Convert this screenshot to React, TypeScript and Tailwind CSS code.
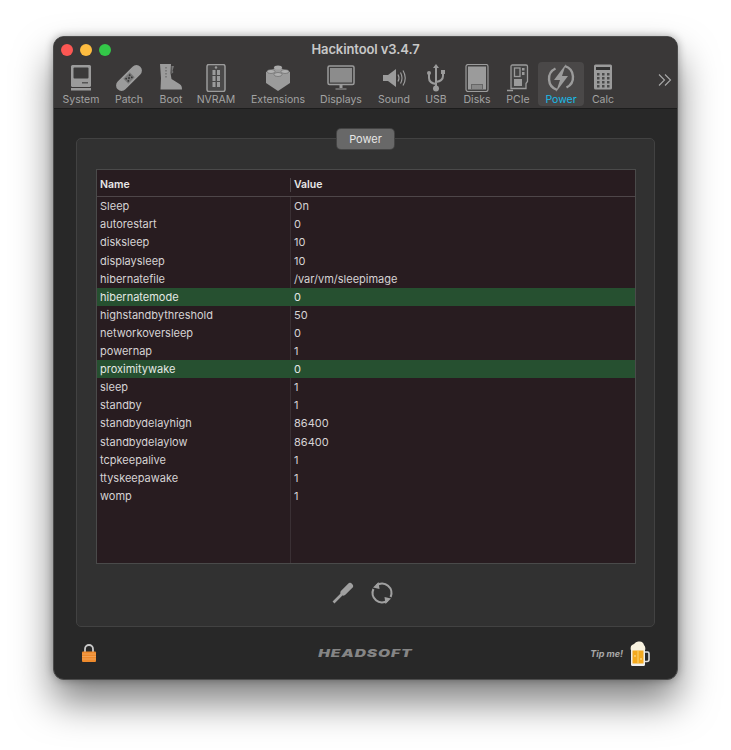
import type { ReactNode } from "react"

const G = "#9b9b9b"

function Icon({ children, w = 34 }: { children: ReactNode; w?: number }) {
  return (
    <svg width={w} height="28" viewBox={`0 0 ${w} 28`} fill="none">
      {children}
    </svg>
  )
}

const tools: { label: string; w: string; icon: ReactNode; active?: boolean }[] = [
  {
    label: "System",
    w: "w-[48px]",
    icon: (
      <Icon>
        <rect x="7" y="1" width="20" height="22" rx="1.5" fill={G} />
        <rect x="9.5" y="3.5" width="15" height="11" rx="1" fill="#3b3a3a" />
        <rect x="18" y="18" width="6" height="1.5" fill="#555" />
        <rect x="7" y="24" width="20" height="2.5" fill={G} />
      </Icon>
    ),
  },
  {
    label: "Patch",
    w: "w-[48px]",
    icon: (
      <Icon>
        <g transform="rotate(-45 17 14)">
          <rect x="1" y="8.5" width="32" height="11" rx="5.5" fill={G} />
          <rect x="12.5" y="10.5" width="9" height="7" fill="#777" />
          <circle cx="14.5" cy="12.5" r=".9" fill="#333" />
          <circle cx="19.5" cy="12.5" r=".9" fill="#333" />
          <circle cx="14.5" cy="15.5" r=".9" fill="#333" />
          <circle cx="19.5" cy="15.5" r=".9" fill="#333" />
          <circle cx="17" cy="14" r=".9" fill="#333" />
        </g>
      </Icon>
    ),
  },
  {
    label: "Boot",
    w: "w-[36px]",
    icon: (
      <Icon w={26}>
        <path d="M2 0h11l-.5 9 1 6 8 5c2 1 2.500 3 2.500 5.500H2.500L3 14z" fill={G} />
        <path d="M13.500 2l2.500 0-1.500 5 1 1-2 2z" fill="#777" />
        <path d="M8 3v11" stroke="#5a5a5a" strokeDasharray="1.500 1.500" />
      </Icon>
    ),
  },
  {
    label: "NVRAM",
    w: "w-[54px]",
    icon: (
      <Icon w={20}>
        <rect x="1" y="0.500" width="18" height="27" rx="2" fill="#4a4949" stroke={G} strokeWidth="1.500" />
        <rect x="6.500" y="6" width="3" height="5" fill={G} />
        <rect x="11" y="6" width="3" height="5" fill={G} />
        <rect x="6.500" y="12" width="3" height="5" fill={G} />
        <rect x="11" y="12" width="3" height="5" fill={G} />
        <rect x="6.500" y="18" width="3" height="5" fill={G} />
        <rect x="11" y="18" width="3" height="5" fill={G} />
        <circle cx="10" cy="3.500" r="1.200" fill={G} />
      </Icon>
    ),
  },
  {
    label: "Extensions",
    w: "w-[70px]",
    icon: (
      <Icon>
        <path d="M5 8l12-5 12 5v11l-12 8-12-8z" fill={G} />
        <ellipse cx="17" cy="3.500" rx="4" ry="2" fill="#aaa" />
        <ellipse cx="10" cy="7.500" rx="4" ry="2" fill="#b0b0b0" stroke="#555" strokeWidth=".5" />
        <ellipse cx="24" cy="7.500" rx="4" ry="2" fill="#b0b0b0" stroke="#555" strokeWidth=".5" />
        <ellipse cx="17" cy="10.500" rx="4" ry="2" fill="#b0b0b0" stroke="#555" strokeWidth=".5" />
      </Icon>
    ),
  },
  {
    label: "Displays",
    w: "w-[56px]",
    icon: (
      <Icon>
        <rect x="4" y="2" width="26" height="18.500" rx="1.500" fill="#3f3e3e" stroke={G} strokeWidth="1.500" />
        <rect x="6" y="4" width="22" height="14.500" fill="#8c8c8c" />
        <path d="M15.500 21h3v3h-3zM11.500 24.500h11v1h-11z" fill={G} />
      </Icon>
    ),
  },
  {
    label: "Sound",
    w: "w-[50px]",
    icon: (
      <Icon>
        <path d="M6 11h5l8-6v18l-8-6H6z" fill={G} />
        <path d="M21 10.500q2 3.500 0 7M23.500 8.500q3 5.500 0 11M26 6.500q4.500 7.500 0 15" stroke={G} strokeWidth="1.200" />
      </Icon>
    ),
  },
  {
    label: "USB",
    w: "w-[34px]",
    icon: (
      <Icon w={24}>
        <path d="M12 4v20M12 20q-7-1-7-6v-4M12 18q7-1 7-6V9" stroke={G} strokeWidth="2" />
        <path d="M12 0l3 4H9z" fill={G} />
        <circle cx="12" cy="24.500" r="3" fill={G} />
        <rect x="3" y="7" width="4" height="4" rx="2" fill={G} />
        <rect x="17" y="6" width="4" height="4" fill={G} />
      </Icon>
    ),
  },
  {
    label: "Disks",
    w: "w-[48px]",
    icon: (
      <Icon w={24}>
        <rect x="1" y="0.500" width="22" height="27" rx="2" fill="#3f3e3e" stroke={G} strokeWidth="1.200" />
        <rect x="3" y="2.500" width="18" height="23" fill={G} />
        <path d="M6 20h12v5.500H6z" fill="#666" />
        <path d="M8 21v4M10 21v4M12 21v4M14 21v4M16 21v4" stroke="#bbb" strokeWidth=".8" />
      </Icon>
    ),
  },
  {
    label: "PCIe",
    w: "w-[34px]",
    icon: (
      <Icon w={24}>
        <path d="M5 2.500q0-1.500 1.500-1.500h13.500q1.500 0 1.500 1.500v15l-1.500 2v5H5z" fill="#444" stroke={G} strokeWidth="1.300" />
        <path d="M1 26.500h6" stroke={G} strokeWidth="1.300" />
        <rect x="8.500" y="4" width="5.500" height="8.500" fill="#444" stroke={G} strokeWidth="1.300" />
        <rect x="16" y="4" width="2.500" height="2.500" fill={G} />
        <rect x="16" y="8" width="2.500" height="3" fill={G} />
        <rect x="8" y="15" width="8" height="7" fill={G} />
      </Icon>
    ),
  },
  {
    label: "Power",
    w: "w-[52px]",
    active: true,
    icon: (
      <Icon>
        <path d="M11.500 4.500A11.500 11.500 0 0 0 13 25.800M22.500 23.500A11.500 11.500 0 0 0 21 2.200" stroke={G} strokeWidth="2.400" />
        <path d="M22 0L10 16h6l-4 12 12-16h-6z" fill={G} />
      </Icon>
    ),
  },
  {
    label: "Calc",
    w: "w-[32px]",
    icon: (
      <Icon w={20}>
        <rect x="1" y="0.500" width="18" height="25" rx="1.500" fill={G} />
        <rect x="3" y="3" width="14" height="3" fill="#333" />
        {[9, 13, 17, 21].map((y) =>
          [4, 9, 14].map((x) => <rect key={`${x}-${y}`} x={x} y={y} width="2.500" height="2.500" fill="#4a4a4a" />),
        )}
      </Icon>
    ),
  },
]

const rows = [
  ["Sleep", "On"],
  ["autorestart", "0"],
  ["disksleep", "10"],
  ["displaysleep", "10"],
  ["hibernatefile", "/var/vm/sleepimage"],
  ["hibernatemode", "0", "on"],
  ["highstandbythreshold", "50"],
  ["networkoversleep", "0"],
  ["powernap", "1"],
  ["proximitywake", "0", "on"],
  ["sleep", "1"],
  ["standby", "1"],
  ["standbydelayhigh", "86400"],
  ["standbydelaylow", "86400"],
  ["tcpkeepalive", "1"],
  ["ttyskeepawake", "1"],
  ["womp", "1"],
]

export default function App() {
  return (
    <div className="min-h-[750px] bg-white pl-[53px] pt-[36px] font-['Inter',sans-serif]">
      <div className="flex h-[644px] w-[625px] flex-col overflow-hidden rounded-[11px] border border-[#4c4c4c] bg-[#282828] shadow-[0_22px_38px_rgba(0,0,0,0.5),0_0_8px_rgba(0,0,0,0.3)]">
        {/* titlebar + toolbar */}
        <div className="h-[72px] shrink-0 border-b border-[#1c1c1c] bg-[#3a3838]">
          <div className="relative flex h-[25px] items-center justify-center">
            <div className="absolute left-[7px] top-[7px] flex gap-[7px]">
              <span className="h-3 w-3 rounded-full bg-[#fc5753]" />
              <span className="h-3 w-3 rounded-full bg-[#fdbc40]" />
              <span className="h-3 w-3 rounded-full bg-[#33c748]" />
            </div>
            <span className="pt-[1px] text-[13px] font-semibold tracking-[-0.1px] text-[#c8c8c8]">Hackintool v3.4.7</span>
          </div>
          <div className="flex pl-[3px]">
            {tools.map((t) => (
              <div key={t.label} className={`flex flex-col items-center ${t.w}`}>
                <div
                  className={`flex h-[44px] flex-col items-center rounded-[4px] pt-[2px] ${
                    t.active ? "w-[46px] bg-[#4a4848]" : ""
                  }`}
                >
                  <div className="flex h-[28px] items-center">{t.icon}</div>
                  <span
                    className={`mt-[1px] whitespace-nowrap text-[10.5px] leading-[14px] ${
                      t.active ? "text-[#19bbe8]" : "text-[#a3a3a3]"
                    }`}
                  >
                    {t.label}
                  </span>
                </div>
              </div>
            ))}
            <svg width="14" height="14" viewBox="0 0 14 14" fill="none" className="ml-auto mr-[5px] mt-[11px]">
              <path d="M1 1.500L6.500 7 1 12.500M7 1.500L12.500 7 7 12.500" stroke="#a8a8a8" strokeWidth="1.100" />
            </svg>
          </div>
        </div>

        {/* content */}
        <div className="flex flex-1 flex-col px-[22px] pt-[29px]">
          <div className="relative flex h-[489px] flex-col rounded-[5px] border border-[#424242] bg-[#313131] pl-[19px] pr-[18px] pt-[30px]">
            <div className="absolute -top-[10px] left-[260px] flex h-[20px] w-[57px] items-center justify-center rounded-[4px] bg-[#686868] text-[11px] text-[#e6e6e6] shadow-[0_0_0_1px_#444]">
              Power
            </div>
            <div className="h-[395px] border border-[#4a4a4a] bg-[#281c20] text-[11px] text-[#d6d3d4]">
              <div className="flex h-[27px] items-center border-b border-[#4e4649] pt-[4px] font-semibold text-[#e8e8e8]">
                <div className="w-[193px] pl-[3px] text-[10.5px]">Name</div>
                <div className="h-[14px] border-l border-[#4e4649] pl-[3px] text-[10.5px] leading-[14px]">Value</div>
              </div>
              <div className="relative h-[366px] pt-[0.5px]">
                <div className="absolute bottom-0 left-[193px] top-0 border-l border-[#3a3034]" />
                {rows.map(([name, value, on]) => (
                  <div key={name} className={`relative flex h-[18.1px] items-center ${on ? "bg-[#265030] text-[#e4e8e4]" : ""}`}>
                    <div className="w-[193px] pl-[3px]">{name}</div>
                    <div className="pl-[4px]">{value}</div>
                  </div>
                ))}
              </div>
            </div>
            <div className="flex flex-1 items-start justify-center gap-[15px] pr-[7px] pt-[17px]">
              <svg width="24" height="24" viewBox="0 0 24 24" fill="none">
                <path d="M2.500 21.500L12 12" stroke="#a0a0a0" strokeWidth="2.600" />
                <path d="M12.500 11.500L19 5" stroke="#a0a0a0" strokeWidth="6" strokeLinecap="round" />
              </svg>
              <svg width="24" height="24" viewBox="0 0 24 24" fill="none">
                <path d="M6.500 4.300A9.500 9.500 0 0 1 20.600 16M17.500 19.700A9.500 9.500 0 0 1 3.400 8" stroke="#a0a0a0" strokeWidth="2.200" />
                <path d="M3 6.500L8.500 1 9.500 8zM21 17.500L15.500 23 14.500 16z" fill="#a0a0a0" />
              </svg>
            </div>
          </div>

          {/* footer */}
          <div className="grid flex-1 grid-cols-3 items-center pl-[5px] pr-[5px] pt-[1px]">
            <svg width="16" height="20" viewBox="0 0 16 20" className="-mt-[2px]">
              <path d="M4 10V6a4 4 0 0 1 8 0v4" fill="none" stroke="#c9c9c9" strokeWidth="1.800" />
              <rect x="1" y="8.500" width="14" height="10.500" rx="1" fill="#ee8a2c" />
              <path d="M1 11h14M1 13.500h14M1 16h14" stroke="#f5a860" strokeWidth=".8" />
            </svg>
            <span className="justify-self-center text-[10px] font-black italic tracking-[0.6px] text-[#858585] [transform:scaleX(1.55)]">
              HEADSOFT
            </span>
            <div className="flex items-center gap-[7px] justify-self-end">
              <span className="text-[9px] font-bold italic text-[#a8a8a8]">Tip me!</span>
              <svg width="20" height="26" viewBox="0 0 20 26">
                <path d="M14 11h3.500q1.500 0 1.500 1.500v6q0 2-2 2h-3" fill="none" stroke="#ddd" strokeWidth="1.600" />
                <rect x="1" y="7" width="14" height="18" rx="1.500" fill="#eee" />
                <rect x="2.500" y="9" width="11" height="13.500" fill="#f4a91e" />
                <rect x="7" y="10" width="2" height="12" fill="#f8c04a" />
                <circle cx="5" cy="15" r="1" fill="#fbd27a" />
                <circle cx="11" cy="18" r="1" fill="#fbd27a" />
                <path d="M1 9.500q-1.500-5 3-6.500 2-3 5-2.500 4-.5 5 3.500 2 2 1 5.500z" fill="#f8f2df" />
              </svg>
            </div>
          </div>
        </div>
      </div>
    </div>
  )
}
